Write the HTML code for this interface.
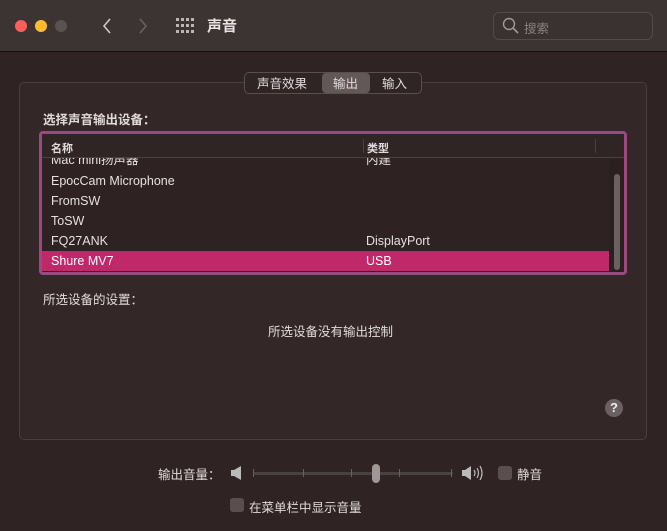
<!DOCTYPE html>
<html><head><meta charset="utf-8"><style>
*{margin:0;padding:0;box-sizing:border-box}
body{width:667px;height:531px;background:#2f2323;font-family:"Liberation Sans","Noto Sans CJK SC",sans-serif;color:#e0dada;position:relative;overflow:hidden;font-size:13px}
.a{position:absolute}
.tb{left:0;top:0;width:667px;height:52px;background:#3c3433;border-bottom:1px solid #141010}
.dot{width:12px;height:12px;border-radius:50%;top:20px}
.box{left:19px;top:82px;width:628px;height:358px;border:1px solid #4a3e3e;border-radius:5px;background:#332727}
.tab{left:244px;top:72px;width:178px;height:22px;border:1px solid #5a4e4e;border-radius:5px;background:#2f2525}
.tbl{left:39px;top:131px;width:588px;height:144px;border:3px solid #9b4a80;border-radius:4px;background:#2e2222;overflow:hidden}
.row{position:absolute;left:0;width:567px;height:20px;line-height:20px;font-size:12.5px;color:#e6e0e0}
.row span{position:absolute;left:9px}.row b{position:absolute;left:324px;font-weight:normal}
.cb{width:14px;height:14px;border-radius:3px;background:#5a4e4e}
</style></head><body>
<div class="a tb"></div>
<div class="a dot" style="left:15px;background:#fe5f57"></div>
<div class="a dot" style="left:35px;background:#febc2e"></div>
<div class="a dot" style="left:55px;background:#5a5252"></div>
<svg class="a" style="left:100px;top:17px" width="50" height="18"><path d="M10 2 L4 9 L10 16" stroke="#cfc8c8" stroke-width="1.6" fill="none"/><path d="M40 2 L46 9 L40 16" stroke="#6a6060" stroke-width="1.6" fill="none"/></svg>
<svg class="a" style="left:176px;top:18px" width="18" height="16" fill="#bdb5b5"><g><rect x="0" y="0" width="3" height="3"/><rect x="5" y="0" width="3" height="3"/><rect x="10" y="0" width="3" height="3"/><rect x="15" y="0" width="3" height="3"/><rect x="0" y="6" width="3" height="3"/><rect x="5" y="6" width="3" height="3"/><rect x="10" y="6" width="3" height="3"/><rect x="15" y="6" width="3" height="3"/><rect x="0" y="12" width="3" height="3"/><rect x="5" y="12" width="3" height="3"/><rect x="10" y="12" width="3" height="3"/><rect x="15" y="12" width="3" height="3"/></g></svg>
<div class="a" style="left:207px;top:15px;font-size:15px;font-weight:bold;color:#e8e2e2">声音</div>
<div class="a" style="left:493px;top:12px;width:160px;height:28px;border:1px solid #544a4a;border-radius:6px;background:#3a3231"></div>
<svg class="a" style="left:502px;top:17px" width="18" height="18"><circle cx="7" cy="7" r="5.5" stroke="#a09898" stroke-width="1.4" fill="none"/><path d="M11 11 L16 16" stroke="#a09898" stroke-width="1.6"/></svg>
<div class="a" style="left:524px;top:18px;font-size:12.5px;color:#8a8080">搜索</div>
<div class="a box"></div>
<div class="a tab"></div>
<div class="a" style="left:322px;top:73px;width:48px;height:20px;background:#625858;border-radius:4px"></div>
<div class="a" style="left:257px;top:73px;font-size:12.5px">声音效果</div>
<div class="a" style="left:333px;top:73px;font-size:12.5px">输出</div>
<div class="a" style="left:382px;top:73px;font-size:12.5px">输入</div>
<div class="a" style="left:43px;top:109px;font-size:12.5px;font-weight:bold">选择声音输出设备：</div>
<div class="a tbl">
<div class="row" style="top:16px"><span>Mac mini扬声器</span><b>内建</b></div>
<div class="a" style="left:0;top:0;width:582px;height:24px;background:#2f2525;border-bottom:1px solid #4a4040"></div>
<div class="a" style="left:9px;top:6px;font-size:11px;font-weight:bold">名称</div>
<div class="a" style="left:321px;top:5px;width:1px;height:14px;background:#4a4040"></div>
<div class="a" style="left:325px;top:6px;font-size:11px;font-weight:bold">类型</div>
<div class="a" style="left:553px;top:5px;width:1px;height:14px;background:#4a4040"></div>
<div class="row" style="top:37px"><span>EpocCam Microphone</span></div>
<div class="row" style="top:57px"><span>FromSW</span></div>
<div class="row" style="top:77px"><span>ToSW</span></div>
<div class="row" style="top:97px"><span>FQ27ANK</span><b>DisplayPort</b></div>
<div class="row" style="top:117px;background:#c0286a;color:#fff"><span>Shure MV7</span><b>USB</b></div>
<div class="a" style="left:567px;top:25px;width:15px;height:115px;background:#2a2020"></div>
<div class="a" style="left:572px;top:40px;width:6px;height:96px;border-radius:3px;background:#6a6262"></div>
</div>
<div class="a" style="left:43px;top:289px;font-size:12.5px">所选设备的设置：</div>
<div class="a" style="left:268px;top:321px;font-size:12.5px">所选设备没有输出控制</div>
<div class="a" style="left:605px;top:399px;width:18px;height:18px;border-radius:50%;background:#6a6262;color:#eee;font-size:13px;text-align:center;line-height:18px;font-weight:bold">?</div>
<div class="a" style="left:158px;top:464px;font-size:12.5px">输出音量：</div>
<svg class="a" style="left:230px;top:465px" width="14" height="16"><path d="M1 5 H4 L11 1 V15 L4 11 H1Z" fill="#bbb"/></svg>
<div class="a" style="left:253px;top:472px;width:200px;height:3px;background:#4a4242;border-radius:2px"></div>
<div class="a" style="left:253px;top:469px;width:1px;height:8px;background:#6a6262"></div>
<div class="a" style="left:303px;top:469px;width:1px;height:8px;background:#6a6262"></div>
<div class="a" style="left:351px;top:469px;width:1px;height:8px;background:#6a6262"></div>
<div class="a" style="left:399px;top:469px;width:1px;height:8px;background:#6a6262"></div>
<div class="a" style="left:451px;top:469px;width:1px;height:8px;background:#6a6262"></div>
<div class="a" style="left:372px;top:464px;width:8px;height:19px;border-radius:4px;background:#a09898"></div>
<svg class="a" style="left:461px;top:464px" width="24" height="18"><path d="M1 6 H4 L10 2 V16 L4 12 H1Z" fill="#bbb"/><path d="M13 6 Q15 9 13 12 M16 4 Q19 9 16 14 M19 2 Q23 9 19 16" stroke="#bbb" stroke-width="1.2" fill="none"/></svg>
<div class="a cb" style="left:498px;top:466px"></div>
<div class="a" style="left:517px;top:464px;font-size:12.5px">静音</div>
<div class="a cb" style="left:230px;top:498px"></div>
<div class="a" style="left:249px;top:497px;font-size:12.5px">在菜单栏中显示音量</div>
</body></html>
